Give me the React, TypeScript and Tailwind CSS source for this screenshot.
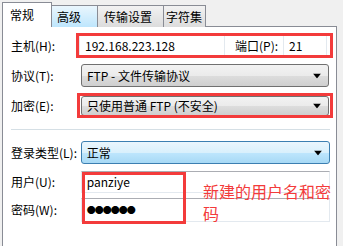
import React from "react";

const font = { fontFamily: '"Noto Sans CJK SC", "Liberation Sans", sans-serif' };

function Arrow() {
  return (
    <svg width="8" height="5" viewBox="0 0 8 5" className="absolute right-[7px] top-1/2 -translate-y-1/2">
      <polygon points="0,0 8,0 4,5" fill="#000" />
    </svg>
  );
}

function Select({ text, focused }: { text: string; focused?: boolean }) {
  return (
    <div
      className={
        "relative flex items-center h-full w-full rounded-[3px] border pl-[5px] text-[12px] text-black " +
        (focused
          ? "border-[#3c7fb1] bg-[linear-gradient(#eaf6fd_0%,#d9f0fc_50%,#bee6fd_51%,#a7d9f5_100%)]"
          : "border-[#707070] bg-[linear-gradient(#f2f2f2_0%,#ebebeb_50%,#dddddd_51%,#cfcfcf_100%)]")
      }
    >
      {text}
      <Arrow />
    </div>
  );
}

function Input({ children, className = "" }: { children?: React.ReactNode; className?: string }) {
  return (
    <div
      className={
        "flex items-center h-full border border-[#e3e9ef] border-t-[#abadb3] bg-white pl-[5px] text-[12px] text-black " +
        className
      }
    >
      {children}
    </div>
  );
}

export default function App() {
  return (
    <div className="relative w-[343px] h-[246px] bg-[#f0f0f0] overflow-hidden" style={font}>
      {/* tabs */}
      <div className="flex items-end h-[27px] pl-[2px]">
        <div className="relative z-10 h-[25px] w-[50px] border border-b-0 border-[#898c95] bg-white text-[12px] pl-[7px] pt-[3px]">
          常规
        </div>
        <div className="h-[22px] w-[46px] border border-l-0 border-b-0 border-[#898c95] bg-[linear-gradient(#eaf6fd,#bee6fd)] text-[12px] pl-[5px] pt-[2px]">
          高级
        </div>
        <div className="h-[22px] w-[66px] border border-l-0 border-b-0 border-[#898c95] bg-[linear-gradient(#f2f2f2,#dcdcdc)] text-[12px] pl-[6px] pt-[2px]">
          传输设置
        </div>
        <div className="h-[22px] w-[42px] border border-l-0 border-b-0 border-[#898c95] bg-[linear-gradient(#f2f2f2,#dcdcdc)] text-[12px] pl-[2px] pt-[2px]">
          字符集
        </div>
      </div>
      {/* panel */}
      <div className="-mt-[1px] ml-[2px] w-[335px] h-[230px] border border-[#898c95] bg-white text-[12px] text-black">
        <div className="flex flex-col pl-[8px] pr-[6px]">
          <div className="flex items-center h-[22px] mt-[8px]">
            <div className="w-[68px]">主机(H):</div>
            <div className="w-[146px] h-full">
              <Input>192.168.223.128</Input>
            </div>
            <div className="w-[58px] pl-[10px]">端口(P):</div>
            <div className="w-[44px] h-full">
              <Input>21</Input>
            </div>
          </div>
          <div className="flex items-center h-[23px] mt-[7px]">
            <div className="w-[70px]">协议(T):</div>
            <div className="w-[248px] h-full">
              <Select text="FTP - 文件传输协议" />
            </div>
          </div>
          <div className="flex items-center h-[20px] mt-[9px]">
            <div className="w-[70px]">加密(E):</div>
            <div className="w-[248px] h-full">
              <Select text="只使用普通 FTP (不安全)" />
            </div>
          </div>
          <div className="h-[1px] bg-[#d5dfe5] mt-[13px] mr-[0px]" />
          <div className="flex items-center h-[23px] mt-[11px]">
            <div className="w-[70px]">登录类型(L):</div>
            <div className="w-[250px] h-full">
              <Select text="正常" focused />
            </div>
          </div>
          <div className="flex items-center h-[22px] mt-[7px]">
            <div className="w-[70px]">用户(U):</div>
            <div className="w-[250px] h-full">
              <Input>panziye</Input>
            </div>
          </div>
          <div className="flex items-center h-[24px] mt-[5px]">
            <div className="w-[70px]">密码(W):</div>
            <div className="w-[250px] h-full">
              <Input>
                <span className="text-[9px] tracking-[-1px] font-bold">●●●●●●</span>
              </Input>
            </div>
          </div>
        </div>
      </div>
      {/* annotations */}
      <div className="absolute left-[76px] top-[33px] w-[257px] h-[25px] border-[3px] border-[#f33b3b]" />
      <div className="absolute left-[77px] top-[93px] w-[256px] h-[25px] border-[3px] border-[#f33b3b]" />
      <div className="absolute left-[82px] top-[172px] w-[104px] h-[52px] border-[3px] border-[#f33b3b]" />
      <div className="absolute left-[203px] top-[180px] w-[135px] text-[16px] leading-[22px] text-[#f33b3b]">
        新建的用户名和密码
      </div>
    </div>
  );
}
